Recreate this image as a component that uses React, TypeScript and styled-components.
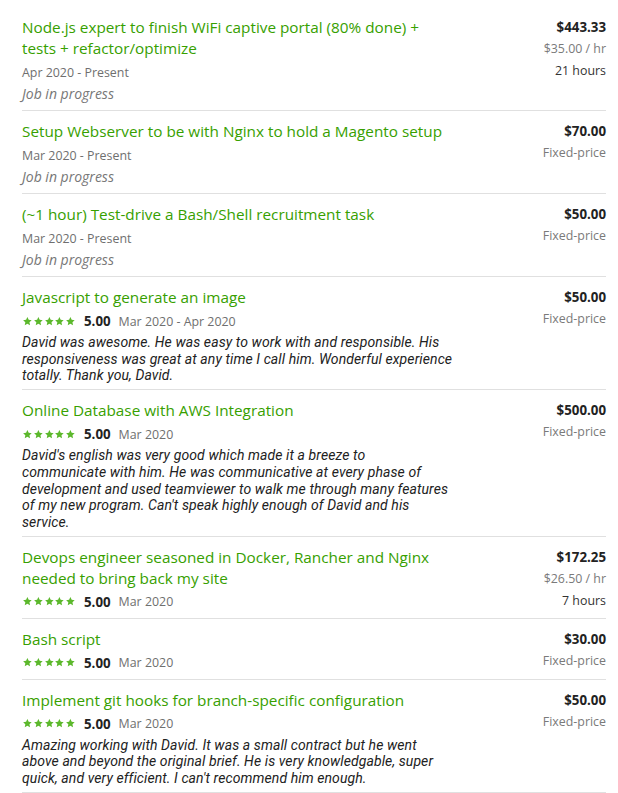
import styled, { createGlobalStyle } from "styled-components";

const GlobalStyle = createGlobalStyle`
  html, body {
    margin: 0;
    padding: 0;
    background: #ffffff;
  }
  body {
    font-family: "Open Sans", "Liberation Sans", sans-serif;
    color: #222222;
  }
`;

interface IJob {
  title: string;
  amount: string;
  rate?: string;
  hours?: string;
  period: string;
  rating?: string;
  inProgress?: boolean;
  review?: string[];
}

// review lines are kept as they wrap in the original layout
const jobs: IJob[] = [
  {
    title: "Node.js expert to finish WiFi captive portal (80% done) + tests + refactor/optimize",
    amount: "$443.33",
    rate: "$35.00 / hr",
    hours: "21 hours",
    period: "Apr 2020 - Present",
    inProgress: true,
  },
  {
    title: "Setup Webserver to be with Nginx to hold a Magento setup",
    amount: "$70.00",
    period: "Mar 2020 - Present",
    inProgress: true,
  },
  {
    title: "(~1 hour) Test-drive a Bash/Shell recruitment task",
    amount: "$50.00",
    period: "Mar 2020 - Present",
    inProgress: true,
  },
  {
    title: "Javascript to generate an image",
    amount: "$50.00",
    period: "Mar 2020 - Apr 2020",
    rating: "5.00",
    review: [
      "David was awesome. He was easy to work with and responsible. His",
      "responsiveness was great at any time I call him. Wonderful experience",
      "totally. Thank you, David.",
    ],
  },
  {
    title: "Online Database with AWS Integration",
    amount: "$500.00",
    period: "Mar 2020",
    rating: "5.00",
    review: [
      "David's english was very good which made it a breeze to",
      "communicate with him. He was communicative at every phase of",
      "development and used teamviewer to walk me through many features",
      "of my new program. Can't speak highly enough of David and his",
      "service.",
    ],
  },
  {
    title: "Devops engineer seasoned in Docker, Rancher and Nginx needed to bring back my site",
    amount: "$172.25",
    rate: "$26.50 / hr",
    hours: "7 hours",
    period: "Mar 2020",
    rating: "5.00",
  },
  {
    title: "Bash script",
    amount: "$30.00",
    period: "Mar 2020",
    rating: "5.00",
  },
  {
    title: "Implement git hooks for branch-specific configuration",
    amount: "$50.00",
    period: "Mar 2020",
    rating: "5.00",
    review: [
      "Amazing working with David. It was a small contract but he went",
      "above and beyond the original brief. He is very knowledgable, super",
      "quick, and very efficient. I can't recommend him enough.",
    ],
  },
];

const StyledList = styled.ul`
  list-style: none;
  margin: 0;
  padding: 7px 12px 0 22px;
  width: 618px;
  box-sizing: border-box;
`;

const StyledItem = styled.li`
  display: flex;
  justify-content: space-between;
  padding: 10px 0 5px;
  border-bottom: 1px solid #e0e0e0;
`;

const StyledMain = styled.div`
  width: 430px;
  display: flex;
  flex-direction: column;
`;

const StyledTitle = styled.a`
  color: #37a000;
  font-size: 15.3px;
  font-weight: 500;
  line-height: 21px;
  text-decoration: none;
  margin-bottom: 2px;
`;

const StyledMeta = styled.div`
  display: flex;
  align-items: center;
  gap: 8px;
  height: 22px;
  font-size: 12.4px;
  color: #6f6f6f;
`;

const StyledStars = styled.span`
  display: inline-flex;
  svg {
    width: 10.8px;
    height: 10.8px;
    fill: #5cb82c;
  }
`;

const StyledScore = styled.span`
  font-size: 13.3px;
  font-weight: 700;
  color: #222222;
`;

const StyledStatus = styled.div`
  font-size: 14px;
  font-style: italic;
  color: #777777;
  line-height: 22px;
`;

const StyledReview = styled.p`
  margin: 2px 0 0;
  font-family: Roboto, "Liberation Sans", sans-serif;
  font-size: 14px;
  font-style: italic;
  letter-spacing: 0.1px;
  line-height: 16.7px;
  color: #222222;
`;

const StyledReviewLine = styled.span`
  display: block;
  white-space: nowrap;
`;

const StyledSide = styled.div`
  display: flex;
  flex-direction: column;
  align-items: flex-end;
  text-align: right;
`;

const StyledAmount = styled.div`
  font-size: 13.3px;
  font-weight: 700;
  color: #222222;
  line-height: 21px;
`;

const StyledSideNote = styled.div<{ $dark?: boolean }>`
  font-size: 12.4px;
  color: ${({ $dark }) => ($dark ? "#333333" : "#7a7a7a")};
  line-height: 22px;
`;

const Star = () => (
  <svg viewBox="0 0 24 24">
    <path d="M12 2.5l2.9 6.1 6.6.8-4.9 4.6 1.3 6.6L12 17.3l-5.9 3.3 1.3-6.6-4.9-4.6 6.6-.8z" />
  </svg>
);

const Job = ({ job }: { job: IJob }) => (
  <StyledItem>
    <StyledMain>
      <StyledTitle href="#">{job.title}</StyledTitle>
      <StyledMeta>
        {job.rating ? (
          <>
            <StyledStars>
              {[0, 1, 2, 3, 4].map((i) => (
                <Star key={i} />
              ))}
            </StyledStars>
            <StyledScore>{job.rating}</StyledScore>
          </>
        ) : null}
        <span>{job.period}</span>
      </StyledMeta>
      {job.inProgress ? <StyledStatus>Job in progress</StyledStatus> : null}
      {job.review ? (
        <StyledReview>
          {job.review.map((line) => (
            <StyledReviewLine key={line}>{line}</StyledReviewLine>
          ))}
        </StyledReview>
      ) : null}
    </StyledMain>
    <StyledSide>
      <StyledAmount>{job.amount}</StyledAmount>
      {job.rate ? (
        <>
          <StyledSideNote>{job.rate}</StyledSideNote>
          <StyledSideNote $dark>{job.hours}</StyledSideNote>
        </>
      ) : (
        <StyledSideNote>Fixed-price</StyledSideNote>
      )}
    </StyledSide>
  </StyledItem>
);

const App = () => (
  <>
    <GlobalStyle />
    <StyledList>
      {jobs.map((job) => (
        <Job key={job.title} job={job} />
      ))}
    </StyledList>
  </>
);

export default App;
